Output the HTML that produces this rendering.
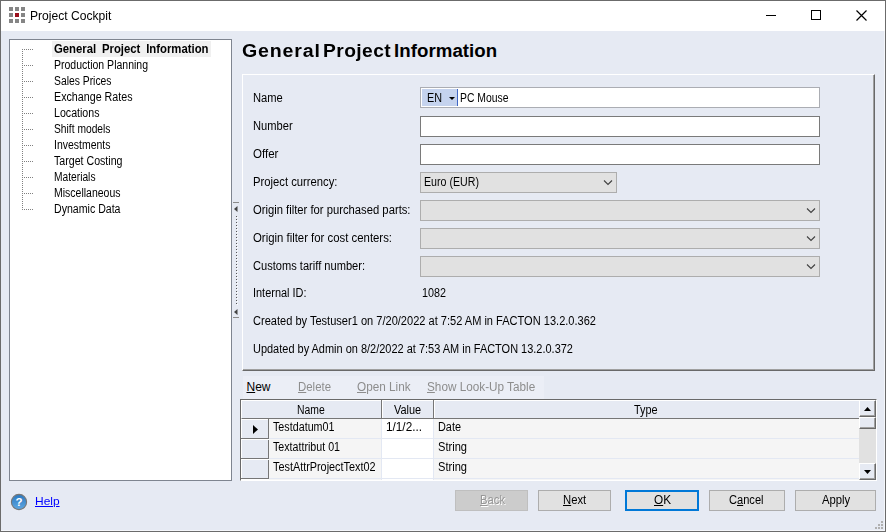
<!DOCTYPE html>
<html><head><meta charset="utf-8"><title>Project Cockpit</title>
<style>
*{box-sizing:border-box;margin:0;padding:0}
html,body{width:886px;height:532px;overflow:hidden;background:#e6eaf3}
body{font-family:"Liberation Sans",Arial,sans-serif;font-size:11px;color:#000;position:relative}
.a{position:absolute}
.t{position:absolute;white-space:pre;transform-origin:0 0}
u{text-decoration:underline;text-underline-offset:1px}
.inp{position:absolute;left:420px;width:400px;height:21px;background:#fff;border:1px solid #7a7a7a}
.cmb{position:absolute;left:420px;width:400px;height:21px;background:#e1e1e1;border:1px solid #adadad}
.btn{position:absolute;top:490px;height:21px;background:#e1e1e1;border:1px solid #adadad}
.hl{position:absolute;height:1px;background:#e3e8f3}
</style></head><body>
<!-- window frame -->
<div class="a" style="left:0;top:0;width:886px;height:532px;border:1px solid #6b6b6b;"></div>
<div class="a" style="left:1px;top:1px;width:884px;height:30px;background:#fff"></div>
<div class="a" style="left:884px;top:31px;width:1px;height:500px;background:#f4f6fa"></div>
<div class="a" style="left:1px;top:530px;width:884px;height:1px;background:#f4f6fa"></div>
<!-- title icon -->
<svg class="a" style="left:9px;top:7px" width="16" height="16" viewBox="0 0 16 16">
 <g fill="#858585"><rect x="0" y="0" width="4" height="4"/><rect x="6" y="0" width="4" height="4"/><rect x="12" y="0" width="4" height="4"/>
 <rect x="0" y="6" width="4" height="4"/><rect x="12" y="6" width="4" height="4"/>
 <rect x="0" y="12" width="4" height="4"/><rect x="6" y="12" width="4" height="4"/><rect x="12" y="12" width="4" height="4"/></g>
 <rect x="6" y="6" width="4" height="4" fill="#9b0f1c"/>
</svg>
<!-- window controls -->
<svg class="a" style="left:760px;top:5px" width="120" height="22" viewBox="0 0 120 22" fill="none" stroke="#000" stroke-width="1">
 <path d="M6 10.5h10"/><rect x="51.5" y="5.5" width="9" height="9"/><path d="M96.5 5.5l10 10M106.5 5.5l-10 10" stroke-width="1.2"/>
</svg>

<!-- tree -->
<div class="a" style="left:9px;top:39px;width:223px;height:442px;background:#fff;border:1px solid #7f8590"></div>
<div class="a" style="left:52px;top:41px;width:159px;height:16px;background:#f0f0f0"></div>
<svg class="a" style="left:20px;top:44px" width="16" height="170" viewBox="0 0 16 170" fill="none" stroke="#808080" stroke-width="1" stroke-dasharray="1 1" shape-rendering="crispEdges">
 <path d="M2.5 5v161"/>
 <path d="M2 5.5h11M2 21.5h11M2 37.5h11M2 53.5h11M2 69.5h11M2 85.5h11M2 101.5h11M2 117.5h11M2 133.5h11M2 149.5h11M2 165.5h11"/>
</svg>

<!-- splitter -->
<svg class="a" style="left:232px;top:198px" width="10" height="124" viewBox="0 0 10 124">
 <path d="M1 4.5h6M1 119.5h6" stroke="#8a8a8a" fill="none"/>
 <path d="M5.5 8v6l-3.5-3z" fill="#444"/><path d="M5.5 111v6l-3.5-3z" fill="#444"/>
 <path d="M5.5 19v88" stroke="#fff" stroke-width="1" stroke-dasharray="1 2" fill="none"/>
 <path d="M4.5 18v88" stroke="#555" stroke-width="1" stroke-dasharray="1 2" fill="none"/>
</svg>

<!-- group box -->
<div class="a" style="left:242px;top:74px;width:633px;height:297px;border:1px solid #fff;border-right:1px solid #696969;border-bottom:1px solid #696969;box-shadow:inset -1px -1px 0 #a0a0a0"></div>

<div class="inp" style="top:87px;border-color:#abadb3">
 <div class="a" style="left:1px;top:1px;width:35px;height:17px;background:#c5d3ee"></div>
 <div class="a" style="left:36px;top:1px;width:1px;height:17px;background:#3f66c4"></div>
 <svg class="a" style="left:28px;top:9px" width="6" height="3" viewBox="0 0 6 3"><path d="M0 0h6l-3 3z" fill="#000"/></svg>
</div>
<div class="inp" style="top:116px"></div>
<div class="inp" style="top:144px"></div>
<div class="cmb" style="top:172px;width:197px"><svg class="a" style="left:182px;top:7px" width="10" height="6" viewBox="0 0 10 6" fill="none" stroke="#404040" stroke-width="1.1"><path d="M1 0.5l4 4l4-4"/></svg></div>
<div class="cmb" style="top:200px"><svg class="a" style="left:385px;top:7px" width="10" height="6" viewBox="0 0 10 6" fill="none" stroke="#404040" stroke-width="1.1"><path d="M1 0.5l4 4l4-4"/></svg></div>
<div class="cmb" style="top:228px"><svg class="a" style="left:385px;top:7px" width="10" height="6" viewBox="0 0 10 6" fill="none" stroke="#404040" stroke-width="1.1"><path d="M1 0.5l4 4l4-4"/></svg></div>
<div class="cmb" style="top:256px"><svg class="a" style="left:385px;top:7px" width="10" height="6" viewBox="0 0 10 6" fill="none" stroke="#404040" stroke-width="1.1"><path d="M1 0.5l4 4l4-4"/></svg></div>

<!-- toolbar strip -->
<div class="a" style="left:243px;top:376px;width:301px;height:23px;background:#ebeef6"></div>

<!-- grid -->
<div class="a" style="left:240px;top:399px;width:637px;height:82px;background:#fff;border:1px solid #696969;border-right-color:#fff;border-bottom-color:#fff"></div>
<!-- header -->
<div class="a" style="left:241px;top:400px;width:618px;height:19px;background:#e6eaf3;border-top:1px solid #fff;border-left:1px solid #fff;border-bottom:1px solid #767676"></div>
<div class="a" style="left:381px;top:400px;width:2px;height:18px;background:#fff;border-left:1px solid #767676"></div>
<div class="a" style="left:433px;top:400px;width:2px;height:18px;background:#fff;border-left:1px solid #767676"></div>
<!-- row header col -->
<div class="a" style="left:241px;top:419px;width:28px;height:61px;background:#e6eaf3;border-left:1px solid #fff;border-right:1px solid #767676"></div>
<div class="a" style="left:241px;top:419px;width:27px;height:1px;background:#fff"></div>
<div class="a" style="left:241px;top:438px;width:28px;height:2px;background:#fff;border-top:1px solid #767676"></div>
<div class="a" style="left:241px;top:458px;width:28px;height:2px;background:#fff;border-top:1px solid #767676"></div>
<div class="a" style="left:241px;top:478px;width:28px;height:2px;background:#fff;border-top:1px solid #767676"></div>
<!-- cells -->
<div class="a" style="left:269px;top:419px;width:113px;height:61px;background:#f5f5f5;border-right:1px solid #e3e8f3"></div>
<div class="a" style="left:433px;top:419px;width:426px;height:61px;background:#f5f5f5;border-left:1px solid #e3e8f3"></div>
<div class="hl" style="left:269px;top:438px;width:590px"></div>
<div class="hl" style="left:269px;top:458px;width:590px"></div>
<div class="hl" style="left:269px;top:478px;width:590px"></div>
<svg class="a" style="left:252px;top:424px" width="8" height="11" viewBox="0 0 8 11"><path d="M1 1l5 4.5l-5 4.5z" fill="#000"/></svg>
<!-- scrollbar -->
<div class="a" style="left:859px;top:400px;width:17px;height:80px;background:#e1e1e1"></div>
<div class="a" style="left:859px;top:400px;width:17px;height:17px;background:#e6eaf3;border:1px solid #fff;border-right-color:#696969;border-bottom-color:#696969;box-shadow:inset -1px -1px 0 #a0a0a0"></div>
<div class="a" style="left:859px;top:417px;width:17px;height:12px;background:#e6eaf3;border:1px solid #fff;border-right-color:#696969;border-bottom-color:#696969;box-shadow:inset -1px -1px 0 #a0a0a0"></div>
<div class="a" style="left:859px;top:463px;width:17px;height:17px;background:#e6eaf3;border:1px solid #fff;border-right-color:#696969;border-bottom-color:#696969;box-shadow:inset -1px -1px 0 #a0a0a0"></div>
<svg class="a" style="left:863px;top:406px" width="9" height="6" viewBox="0 0 9 6"><path d="M1 5h7l-3.5-4z" fill="#000"/></svg>
<svg class="a" style="left:863px;top:469px" width="9" height="6" viewBox="0 0 9 6"><path d="M1 1h7l-3.5 4z" fill="#000"/></svg>

<!-- help icon -->
<svg class="a" style="left:10px;top:493px" width="18" height="18" viewBox="0 0 18 18">
 <defs><linearGradient id="hg" x1="0" y1="0" x2="0" y2="1"><stop offset="0" stop-color="#2a78c0"/><stop offset="1" stop-color="#5fa8e2"/></linearGradient></defs>
 <circle cx="9" cy="9" r="7.6" fill="url(#hg)" stroke="#767676" stroke-width="1.1"/>
 <text x="9" y="13" font-family="Liberation Sans, sans-serif" font-weight="bold" font-size="11.5" fill="#fff" text-anchor="middle">?</text>
</svg>

<!-- buttons -->
<div class="btn" style="left:455px;width:73px;background:#cccccc;border-color:#bfbfbf"></div>
<div class="btn" style="left:538px;width:73px"></div>
<div class="btn" style="left:625px;width:74px;border:2px solid #0078d7"></div>
<div class="btn" style="left:709px;width:76px"></div>
<div class="btn" style="left:795px;width:81px"></div>
<!-- grip -->
<svg class="a" style="left:875px;top:521px" width="9" height="9" viewBox="0 0 9 9" fill="#b0b0b0"><rect x="6" y="0" width="2" height="2"/><rect x="3" y="3" width="2" height="2"/><rect x="6" y="3" width="2" height="2"/><rect x="0" y="6" width="2" height="2"/><rect x="3" y="6" width="2" height="2"/><rect x="6" y="6" width="2" height="2"/></svg>

<div class="t" style="left:29.5px;top:7.84px;font-size:12px;line-height:16px;transform:scaleX(1.0074);">Project Cockpit</div>
<div class="t" style="left:53.6px;top:40.84px;font-size:12px;line-height:16px;transform:scaleX(0.9441);font-weight:bold;word-spacing:2.8px;">General Project Information</div>
<div class="t" style="left:53.8px;top:56.84px;font-size:12px;line-height:16px;transform:scaleX(0.8751);">Production Planning</div>
<div class="t" style="left:53.8px;top:72.84px;font-size:12px;line-height:16px;transform:scaleX(0.8620);">Sales Prices</div>
<div class="t" style="left:53.8px;top:88.84px;font-size:12px;line-height:16px;transform:scaleX(0.8914);">Exchange Rates</div>
<div class="t" style="left:53.8px;top:104.84px;font-size:12px;line-height:16px;transform:scaleX(0.8856);">Locations</div>
<div class="t" style="left:53.8px;top:120.84px;font-size:12px;line-height:16px;transform:scaleX(0.8557);">Shift models</div>
<div class="t" style="left:53.8px;top:136.84px;font-size:12px;line-height:16px;transform:scaleX(0.8732);">Investments</div>
<div class="t" style="left:53.8px;top:152.84px;font-size:12px;line-height:16px;transform:scaleX(0.8853);">Target Costing</div>
<div class="t" style="left:53.8px;top:168.84px;font-size:12px;line-height:16px;transform:scaleX(0.8524);">Materials</div>
<div class="t" style="left:53.8px;top:184.84px;font-size:12px;line-height:16px;transform:scaleX(0.8745);">Miscellaneous</div>
<div class="t" style="left:53.8px;top:200.84px;font-size:12px;line-height:16px;transform:scaleX(0.8824);">Dynamic Data</div>
<div class="t" style="left:242.1px;top:38.53px;font-size:18.67px;line-height:24px;transform:scaleX(1.0500);font-weight:bold;letter-spacing:0.8px;">General</div>
<div class="t" style="left:323.1px;top:38.53px;font-size:18.67px;line-height:24px;transform:scaleX(1.0300);font-weight:bold;letter-spacing:0.42px;">Project</div>
<div class="t" style="left:394.0px;top:38.53px;font-size:18.67px;line-height:24px;font-weight:bold;letter-spacing:0.06px;">Information</div>
<div class="t" style="left:252.9px;top:89.84px;font-size:12px;line-height:16px;transform:scaleX(0.9308);">Name</div>
<div class="t" style="left:252.9px;top:117.84px;font-size:12px;line-height:16px;transform:scaleX(0.9277);">Number</div>
<div class="t" style="left:252.9px;top:145.84px;font-size:12px;line-height:16px;transform:scaleX(0.9596);">Offer</div>
<div class="t" style="left:252.9px;top:173.84px;font-size:12px;line-height:16px;transform:scaleX(0.9386);">Project currency:</div>
<div class="t" style="left:252.9px;top:201.84px;font-size:12px;line-height:16px;transform:scaleX(0.9371);">Origin filter for purchased parts:</div>
<div class="t" style="left:252.9px;top:229.84px;font-size:12px;line-height:16px;transform:scaleX(0.9474);">Origin filter for cost centers:</div>
<div class="t" style="left:252.9px;top:257.84px;font-size:12px;line-height:16px;transform:scaleX(0.9244);">Customs tariff number:</div>
<div class="t" style="left:252.9px;top:284.84px;font-size:12px;line-height:16px;transform:scaleX(0.9114);">Internal ID:</div>
<div class="t" style="left:252.9px;top:312.84px;font-size:12px;line-height:16px;transform:scaleX(0.9209);">Created by Testuser1 on 7/20/2022 at 7:52 AM in FACTON 13.2.0.362</div>
<div class="t" style="left:252.9px;top:340.84px;font-size:12px;line-height:16px;transform:scaleX(0.9142);">Updated by Admin on 8/2/2022 at 7:53 AM in FACTON 13.2.0.372</div>
<div class="t" style="left:421.6px;top:284.84px;font-size:12px;line-height:16px;transform:scaleX(0.8988);">1082</div>
<div class="t" style="left:427.3px;top:89.84px;font-size:12px;line-height:16px;transform:scaleX(0.8997);">EN</div>
<div class="t" style="left:460.0px;top:89.84px;font-size:12px;line-height:16px;transform:scaleX(0.8656);">PC Mouse</div>
<div class="t" style="left:423.7px;top:173.84px;font-size:12px;line-height:16px;transform:scaleX(0.8869);">Euro (EUR)</div>
<div class="t" style="left:246.5px;top:378.84px;font-size:12px;line-height:16px;"><u>N</u>ew</div>
<div class="t" style="left:298.3px;top:378.84px;font-size:12px;line-height:16px;transform:scaleX(0.9514);color:#8d8d8d;"><u>D</u>elete</div>
<div class="t" style="left:357.2px;top:378.84px;font-size:12px;line-height:16px;transform:scaleX(0.9798);color:#8d8d8d;"><u>O</u>pen Link</div>
<div class="t" style="left:426.7px;top:378.84px;font-size:12px;line-height:16px;transform:scaleX(0.9790);color:#8d8d8d;"><u>S</u>how Look-Up Table</div>
<div class="t" style="left:297.0px;top:401.84px;font-size:12px;line-height:16px;transform:scaleX(0.8652);">Name</div>
<div class="t" style="left:393.5px;top:401.84px;font-size:12px;line-height:16px;transform:scaleX(0.9124);">Value</div>
<div class="t" style="left:634.0px;top:401.84px;font-size:12px;line-height:16px;transform:scaleX(0.9071);">Type</div>
<div class="t" style="left:272.8px;top:418.84px;font-size:12px;line-height:16px;transform:scaleX(0.8950);">Testdatum01</div>
<div class="t" style="left:272.8px;top:438.84px;font-size:12px;line-height:16px;transform:scaleX(0.8889);">Textattribut 01</div>
<div class="t" style="left:272.8px;top:458.84px;font-size:12px;line-height:16px;transform:scaleX(0.9040);">TestAttrProjectText02</div>
<div class="t" style="left:386.0px;top:418.84px;font-size:12px;line-height:16px;transform:scaleX(0.9808);">1/1/2...</div>
<div class="t" style="left:437.5px;top:418.84px;font-size:12px;line-height:16px;transform:scaleX(0.9070);">Date</div>
<div class="t" style="left:437.5px;top:438.84px;font-size:12px;line-height:16px;transform:scaleX(0.9248);">String</div>
<div class="t" style="left:437.5px;top:458.84px;font-size:12px;line-height:16px;transform:scaleX(0.9248);">String</div>
<div class="t" style="left:34.5px;top:493.12px;font-size:11.5px;line-height:16px;transform:scaleX(1.0399);color:#0000ff;"><u>Help</u></div>
<div class="t" style="left:479.5px;top:492.44px;font-size:12px;line-height:16px;transform:scaleX(0.9368);color:#979797;text-shadow:1px 1px 0 #fff;"><u>B</u>ack</div>
<div class="t" style="left:563.3px;top:492.44px;font-size:12px;line-height:16px;transform:scaleX(0.9397);"><u>N</u>ext</div>
<div class="t" style="left:654.0px;top:492.44px;font-size:12px;line-height:16px;transform:scaleX(0.9802);"><u>O</u>K</div>
<div class="t" style="left:729.3px;top:492.44px;font-size:12px;line-height:16px;transform:scaleX(0.9235);">C<u>a</u>ncel</div>
<div class="t" style="left:821.6px;top:492.44px;font-size:12px;line-height:16px;transform:scaleX(0.9390);">Apply</div>
</body></html>
